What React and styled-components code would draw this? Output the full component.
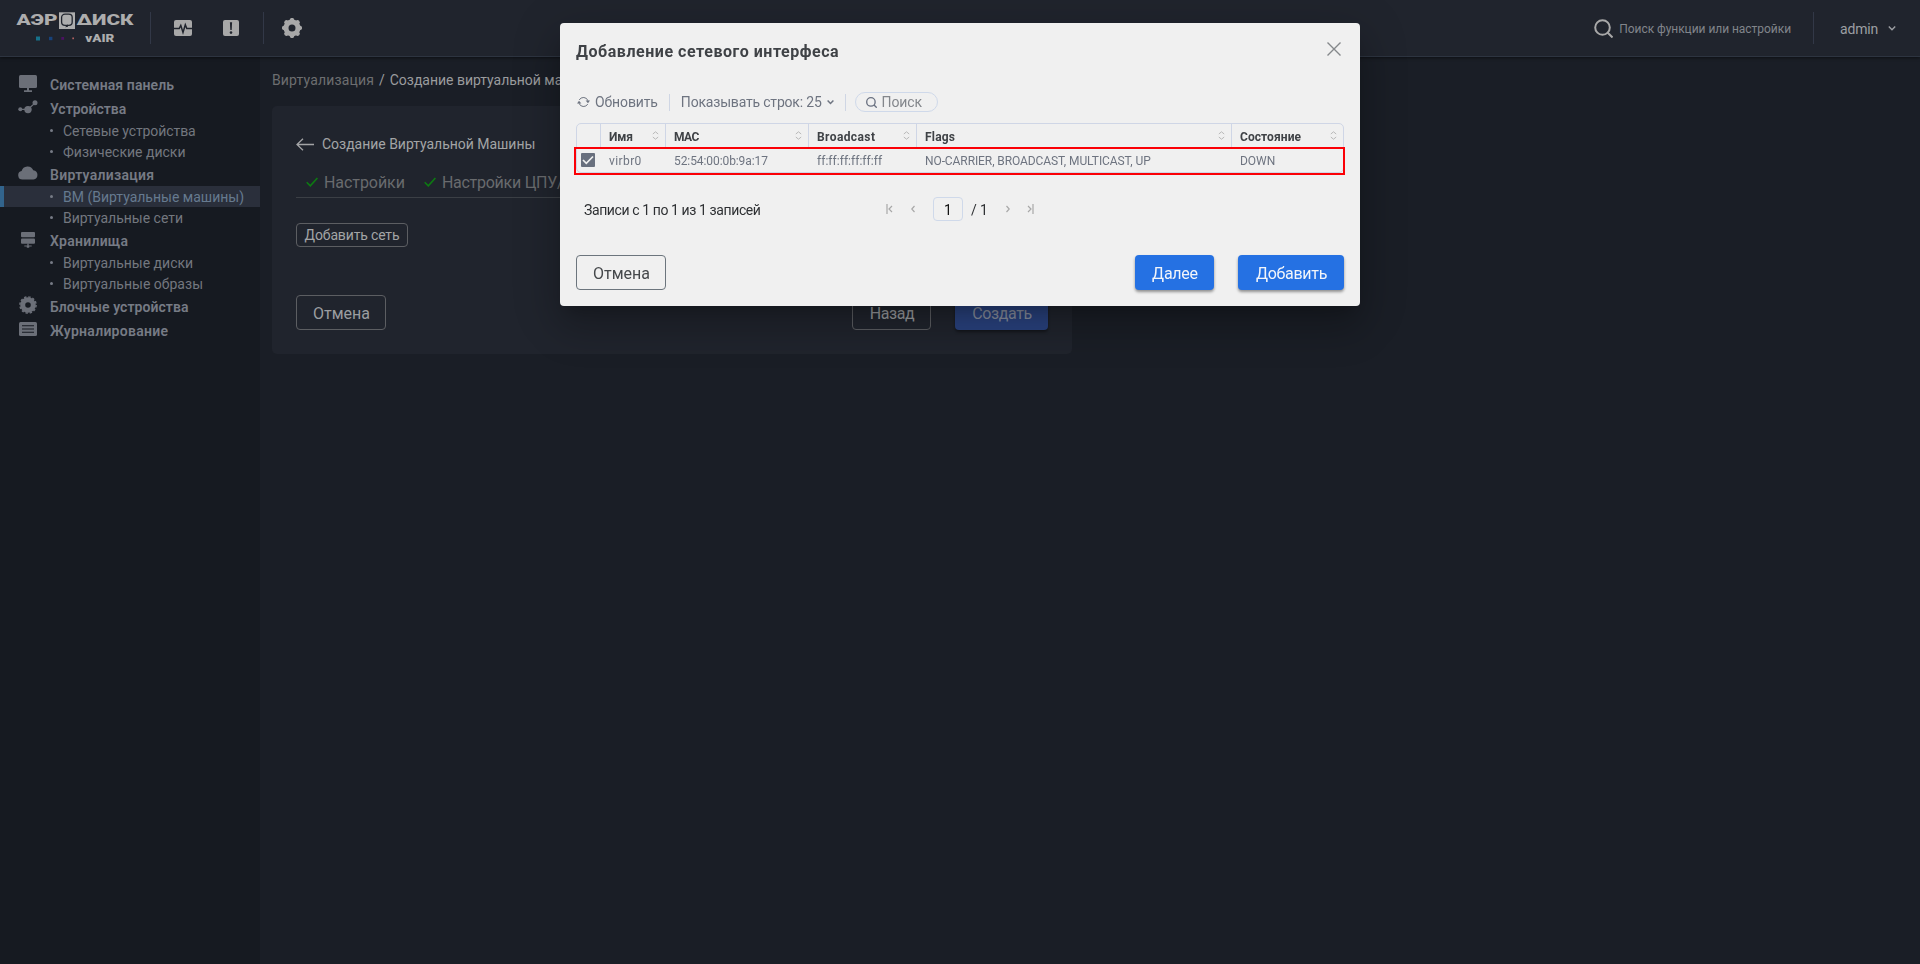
import React from "react";
import styled, { createGlobalStyle, css } from "styled-components";

const GlobalStyle = createGlobalStyle`
  *, *::before, *::after { box-sizing: border-box; }
  body { margin: 0; background: #1a1e26; font-family: Roboto, "Liberation Sans", sans-serif; font-size: 14px; }
  svg { display: block; flex: none; }
`;

/* text with adjustable tracking */
const Label = styled.span`
  letter-spacing: ${(p) => p.$ls || 0}px;
  white-space: nowrap;
`;

const Page = styled.div`
  display: flex;
  flex-direction: column;
  height: 964px;
  overflow: hidden;
`;

/* ---------- header ---------- */
const Header = styled.header`
  display: flex;
  align-items: flex-start;
  height: 57px;
  padding: 12px 24px 0 16px;
  background: #20242d;
  border-bottom: 1px solid #2d3440;
  box-shadow: 0 1px 3px rgba(0, 0, 0, 0.5);
  position: relative;
  color: #a8a8a8;
`;
const HeaderDivider = styled.div`
  width: 1px;
  height: 32px;
  background: #323847;
`;
const HeaderIcons = styled.div`
  display: flex;
  align-items: center;
  height: 32px;
  gap: ${(p) => p.$gap || 0}px;
  padding: ${(p) => p.$pad};
`;
const HeaderSearch = styled.div`
  display: flex;
  align-items: center;
  gap: 6px;
  height: 32px;
  margin-left: auto;
  padding-right: 22px;
  font-size: 12px;
  color: #81858b;
  span { padding-top: 2px; }
  svg { color: #a8a8a8; }
`;
const UserMenu = styled.div`
  display: flex;
  align-items: center;
  gap: 10px;
  height: 34px;
  padding-left: 26px;
  font-size: 14px;
  color: #9c9fa3;
`;

/* ---------- side navigation ---------- */
const Body = styled.div`
  display: flex;
  flex: 1;
`;
const Sidebar = styled.nav`
  width: 260px;
  padding-top: 15px;
  background: #161a21;
`;
const NavSection = styled.div`
  display: flex;
  align-items: center;
  height: 24px;
  padding-left: 18px;
  color: #767b85;
  font-size: 14px;
  font-weight: 600;
  ${Label} { padding-top: 2px; }
`;
const NavIcon = styled.span`
  display: flex;
  justify-content: center;
  align-items: center;
  width: 20px;
  height: 20px;
  margin-right: 12px;
  margin-bottom: ${(p) => p.$lift}px;
  color: #6b6f78;
`;
const NavItem = styled.div`
  display: flex;
  align-items: center;
  height: 21px;
  padding-left: 50px;
  border-left: 0 solid #32648c;
  color: #73777f;
  font-size: 14px;
  &::before {
    content: "";
    width: 3px;
    height: 3px;
    margin-right: 10px;
    border-radius: 50%;
    background: #767b85;
  }
  ${(p) =>
    p.$active &&
    css`
      padding-left: 46px;
      border-left-width: 4px;
      background: #2a2f3b;
      color: #667a8f;
    `}
`;

/* ---------- main area ---------- */
const Main = styled.main`
  flex: 1;
  padding: 14px 12px 0;
`;
const Breadcrumbs = styled.div`
  display: flex;
  gap: 5px;
  height: 18px;
  line-height: 18px;
  font-size: 14px;
  color: #9b9c9e;
`;
const Crumb = styled(Label)`
  color: #6d6e70;
`;
const Card = styled.section`
  display: flex;
  flex-direction: column;
  width: 800px;
  height: 248px;
  margin-top: 17px;
  padding: 24px;
  border-radius: 5px;
  background: #20242d;
`;
const CardTitle = styled.div`
  display: flex;
  align-items: center;
  gap: 8px;
  height: 28px;
  font-size: 14px;
  color: #a3a4a6;
`;
const Tabs = styled.div`
  display: flex;
  height: 35px;
  margin-top: 5px;
  padding: 9px 0 0 10px;
  gap: 19px;
  border-bottom: 1px solid #3b3f45;
`;
const Tab = styled.div`
  display: flex;
  align-items: center;
  gap: 6px;
  height: 20px;
  font-size: 16px;
  color: #696b6e;
  svg { color: #0d7a12; }
`;
const SmallButton = styled.button`
  align-self: flex-start;
  width: 112px;
  height: 24px;
  margin-top: 25px;
  padding: 0;
  border: 1px solid #5c5e62;
  border-radius: 4px;
  background: none;
  color: #a3a4a6;
  font: 14px Roboto, sans-serif;
`;
const Button = styled.button`
  width: ${(p) => p.$w}px;
  height: 35px;
  padding: 2px 0 0 1px;
  border: 1px solid ${(p) => (p.$dim ? "#5c5e62" : "#6c757d")};
  border-radius: 4px;
  background: none;
  color: ${(p) => (p.$dim ? "#9b9da0" : "#45484b")};
  font: 16px Roboto, sans-serif;
  ${(p) =>
    p.$primary &&
    css`
      border: 0;
      background: ${p.$dim ? "#29427f" : "#2571e3"};
      color: ${p.$dim ? "#888f9f" : "#f2f5fa"};
      box-shadow: 0 2px 3px rgba(0, 0, 0, 0.4);
    `}
`;
const ButtonRow = styled.div`
  display: flex;
  gap: 24px;
  margin-top: ${(p) => p.$top}px;
  & > :first-child { margin-right: auto; }
`;

/* ---------- dialog ---------- */
const Overlay = styled.div`
  position: fixed;
  inset: 0;
  display: flex;
  justify-content: center;
  align-items: flex-start;
  padding-top: 23px;
`;
const Dialog = styled.div`
  width: 800px;
  height: 283px;
  padding: 16px;
  border-radius: 4px;
  background: #f0f0f0;
  box-shadow: 0 11px 15px -7px rgba(0, 0, 0, 0.2), 0 24px 38px 3px rgba(0, 0, 0, 0.14),
    0 9px 46px 8px rgba(0, 0, 0, 0.12);
`;
const DialogHead = styled.div`
  display: flex;
  justify-content: space-between;
  align-items: flex-start;
  height: 49px;
  padding-right: 3px;
  color: #3f4246;
  font-size: 16px;
  font-weight: 700;
  line-height: 25px;
`;
const CloseIcon = styled.svg`
  margin-top: 3px;
  color: #85888b;
`;
const Toolbar = styled.div`
  display: flex;
  align-items: center;
  height: 28px;
  font-size: 14px;
  color: #6e7480;
`;
const ToolGroup = styled.div`
  display: flex;
  align-items: center;
  gap: 5px;
  padding: ${(p) => p.$pad};
`;
const ToolDivider = styled.div`
  width: 1px;
  height: 17px;
  background: #cfd6e4;
`;
const SearchPill = styled.div`
  display: flex;
  align-items: center;
  gap: 5px;
  width: 83px;
  height: 20px;
  margin-left: 9px;
  padding-left: 10px;
  border: 1px solid #cfd9ea;
  border-radius: 10px;
  color: #84878c;
  svg { color: #6a7180; }
`;
const Table = styled.div`
  margin-top: 7px;
  height: 50px;
  border: 1px solid #cfd6e6;
  border-radius: 5px;
`;
const columns = css`
  display: grid;
  grid-template-columns: 23px 65px 143px 108px 315px 112px;
  font-size: 12px;
`;
const HeadRow = styled.div`
  ${columns}
  height: 23px;
`;
const HeadCell = styled.div`
  display: flex;
  justify-content: space-between;
  align-items: center;
  padding: 2px 6px 0 8px;
  color: #3f4246;
  font-weight: 700;
  & + & { border-left: 1px solid #cfd6e6; }
  svg { margin-top: -3px; color: #b8b8b8; }
`;
const DataRow = styled.div`
  ${columns}
  position: relative;
  height: 25px;
  color: #6e7480;
  /* frame drawn around the selected row */
  &::after {
    content: "";
    position: absolute;
    inset: 0 -2px -3px -3px;
    border: 2px solid #fb0006;
  }
`;
const Cell = styled.div`
  display: flex;
  align-items: center;
  padding-left: ${(p) => (p.$check ? 4 : 9)}px;
  padding-top: ${(p) => (p.$check ? 0 : 3)}px;
`;
const Checkbox = styled.span`
  display: flex;
  align-items: center;
  justify-content: center;
  width: 14px;
  height: 14px;
  border-radius: 1px;
  background: #69707e;
  color: #f0f0f0;
`;
const Pager = styled.div`
  display: flex;
  align-items: center;
  height: 26px;
  margin-top: 23px;
  padding-left: 8px;
  color: #2e3033;
  font-size: 14px;
  ${Label} { padding-top: 2px; }
`;
const PagerNav = styled.div`
  display: flex;
  align-items: center;
  margin-left: auto;
  padding-right: 310px;
  svg { color: #a8a8a8; }
`;
const PageInput = styled.div`
  width: 30px;
  height: 24px;
  margin: 0 8px 0 18px;
  border: 1px solid #cfd9ea;
  border-radius: 4px;
  color: #111;
  line-height: 24px;
  text-align: center;
`;

/* ---------- icons ---------- */
const Stroke = ({ w, h, d, sw = 1.4, box }) => (
  <svg width={w} height={h} viewBox={box || `0 0 ${w} ${h}`} fill="none" stroke="currentColor" strokeWidth={sw}>
    <path d={d} />
  </svg>
);

const Logo = () => (
  <svg width="119" height="32" viewBox="0 0 119 32" fill="#adadad" fontFamily="Roboto, sans-serif" fontWeight="900">
    <text x="0.5" y="12.6" fontSize="15" textLength="41" lengthAdjust="spacingAndGlyphs">АЭР</text>
    <rect x="43" y="0.3" width="16" height="16.7" />
    <rect x="45.6" y="2.2" width="10.6" height="11.2" rx="3.4" fill="none" stroke="#20242d" strokeWidth="1.3" />
    <path d="M49 15.2l3-3v2.6z" fill="#20242d" />
    <text x="60.5" y="12.6" fontSize="15" textLength="57" lengthAdjust="spacingAndGlyphs">ΔИСК</text>
    <rect x="20" y="24.5" width="4" height="4" fill="#16718a" />
    <rect x="33" y="24.8" width="3.4" height="3.4" fill="#17427a" />
    <rect x="45.3" y="25" width="2.8" height="2.8" fill="#4b1262" />
    <rect x="56.3" y="25.5" width="1.7" height="1.7" fill="#b06060" />
    <text x="69.3" y="30" fontSize="10" textLength="29" lengthAdjust="spacingAndGlyphs">vAIR</text>
  </svg>
);

const PulseIcon = () => (
  <svg width="18" height="16" viewBox="0 0 18 16">
    <rect width="18" height="16" rx="2" fill="#a8a8a8" />
    <path d="M0 8.6h5.2l1.6-3.2 2.2 7 2.3-7.6 1.5 3.8H18" fill="none" stroke="#20242d" strokeWidth="1.5" />
  </svg>
);
const AlertIcon = () => (
  <svg width="16" height="16" viewBox="0 0 16 16">
    <rect width="16" height="16" rx="2" fill="#a8a8a8" />
    <path d="M6.9 2.3h2.2l-.4 7.6H7.3z" fill="#20242d" />
    <circle cx="8" cy="12.6" r="1.3" fill="#20242d" />
  </svg>
);
const GearIcon = () => (
  <svg width="20" height="20" viewBox="-10 -10 20 20" fill="#a8a8a8">
    <circle r="6" fill="none" stroke="#a8a8a8" strokeWidth="5" />
    {[0, 45, 90, 135, 180, 225, 270, 315].map((a) => (
      <circle key={a} cx="0" cy="-7.8" r="2.3" transform={`rotate(${a})`} />
    ))}
  </svg>
);
const MonitorIcon = () => (
  <svg width="18" height="17" viewBox="0 0 18 17" fill="currentColor">
    <rect width="18" height="13" rx="1.5" />
    <path d="M8 13h2v2.2h3V17H5v-1.8h3z" />
  </svg>
);
const NodesIcon = () => (
  <svg width="20" height="14" viewBox="0 0 20 14" fill="currentColor">
    <path d="M2 9.3h8L17.5 2.6" fill="none" stroke="currentColor" strokeWidth="1.2" />
    <circle cx="2.3" cy="9.3" r="2" />
    <circle cx="10" cy="9.6" r="3.7" />
    <circle cx="17" cy="2.7" r="2.5" />
  </svg>
);
const CloudIcon = () => (
  <svg width="20" height="14" viewBox="0 0 20 14" fill="currentColor">
    <path d="M4.5 13.5A4.3 4.3 0 0 1 3.6 5 6.2 6.2 0 0 1 15.3 4.2 4.7 4.7 0 0 1 15.5 13.5z" />
  </svg>
);
const StorageIcon = () => (
  <svg width="14" height="16" viewBox="0 0 14 16" fill="currentColor">
    <rect x="0" y="0" width="14" height="5.2" rx="1" />
    <rect x="0" y="6.5" width="14" height="5.2" rx="1" />
    <path d="M6.3 11.5h1.4v2h3v1H8.200v1.300H5.800v-1.300H3.300v-1h3z" />
  </svg>
);
const CogIcon = () => (
  <svg width="18" height="18" viewBox="-9 -9 18 18">
    <circle r="5.3" fill="none" stroke="currentColor" strokeWidth="5" />
    <circle r="8.1" fill="none" stroke="currentColor" strokeWidth="1.5" strokeDasharray="2.4 1.84" />
  </svg>
);
const JournalIcon = () => (
  <svg width="18" height="14" viewBox="0 0 18 14">
    <rect width="18" height="14" rx="1.5" fill="currentColor" />
    <path d="M3 3.700h12M3 7h12M3 10.300h12" stroke="#161a21" strokeWidth="1.1" />
  </svg>
);
const MagnifierIcon = ({ size, sw }) => (
  <svg width={size} height={size} viewBox="0 0 19 19" fill="none" stroke="currentColor" strokeWidth={sw}>
    <circle cx="8.5" cy="8.5" r="7.3" />
    <path d="M13.5 13.5l5 5" />
  </svg>
);
const CheckIcon = () => <Stroke w={12} h={10} sw={1.6} d="M.7 5.200l3.600 3.700L11.400 1" />;
const RefreshIcon = () => (
  <svg width="13" height="12" viewBox="0 0 13 12" fill="none" stroke="currentColor" strokeWidth="1">
    <path d="M2.2 4A4.800 4.800 0 0 1 11 4.800M10.800 8A4.800 4.800 0 0 1 2 7.200" />
    <path d="M8.600 4.600h4.400L11 7.200zM0 7.400h4.400L2 4.800z" fill="currentColor" stroke="none" />
  </svg>
);
const SortIcon = () => <Stroke w={7} h={9} sw={1} d="M.8 3L3.500.8 6.200 3M.8 6L3.500 8.200 6.200 6" />;

/* ---------- data ---------- */
const NAV = [
  { title: "Системная панель", ls: 0.1, lift: 2, icon: <MonitorIcon />, items: [] },
  {
    title: "Устройства",
    lift: 2,
    icon: <NodesIcon />,
    items: [{ text: "Сетевые устройства", ls: -0.08 }, { text: "Физические диски", ls: 0 }],
  },
  {
    title: "Виртуализация",
    ls: 0.28,
    lift: 2,
    icon: <CloudIcon />,
    items: [{ text: "ВМ (Виртуальные машины)", ls: 0, active: true }, { text: "Виртуальные сети" }],
  },
  {
    title: "Хранилища",
    ls: 0.25,
    lift: 0,
    icon: <StorageIcon />,
    items: [{ text: "Виртуальные диски" }, { text: "Виртуальные образы", ls: 0.02 }],
  },
  { title: "Блочные устройства", ls: 0.05, lift: 2, icon: <CogIcon />, items: [] },
  { title: "Журналирование", ls: 0.27, lift: 2, icon: <JournalIcon />, items: [] },
];

const HEAD = [
  ["Имя", -0.1],
  ["MAC", -0.5],
  ["Broadcast", 0.41],
  ["Flags", 0.2],
  ["Состояние", 0.08],
];
const ROW = [
  ["virbr0", 0.4],
  ["52:54:00:0b:9a:17", -0.08],
  ["ff:ff:ff:ff:ff:ff", 0.03],
  ["NO-CARRIER, BROADCAST, MULTICAST, UP", -0.09],
  ["DOWN", -0.05],
];

function TopBar() {
  return (
    <Header>
      <Logo />
      <HeaderIcons $pad="0 0 0 15px">
        <HeaderDivider />
      </HeaderIcons>
      <HeaderIcons $gap={31} $pad="0 24px 0 23px">
        <PulseIcon />
        <AlertIcon />
      </HeaderIcons>
      <HeaderDivider />
      <HeaderIcons $pad="0 0 0 18px">
        <GearIcon />
      </HeaderIcons>
      <HeaderSearch>
        <MagnifierIcon size={19} sw={2} />
        <Label $ls={-0.04}>Поиск функции или настройки</Label>
      </HeaderSearch>
      <HeaderDivider />
      <UserMenu>
        <Label $ls={-0.2}>admin</Label>
        <Stroke w={8} h={10} d="M.8 2.500L4 5.700 7.200 2.500" />
      </UserMenu>
    </Header>
  );
}

function Navigation() {
  return (
    <Sidebar>
      {NAV.map((s) => (
        <div key={s.title}>
          <NavSection>
            <NavIcon $lift={s.lift}>{s.icon}</NavIcon>
            <Label $ls={s.ls}>{s.title}</Label>
          </NavSection>
          {s.items.map((i) => (
            <NavItem key={i.text} $active={i.active}>
              <Label $ls={i.ls}>{i.text}</Label>
            </NavItem>
          ))}
        </div>
      ))}
    </Sidebar>
  );
}

function InterfaceDialog() {
  return (
    <Overlay>
      <Dialog>
        <DialogHead>
          <Label $ls={0.54}>Добавление сетевого интерфеса</Label>
          <CloseIcon width="14" height="14" viewBox="0 0 14 14" fill="none" stroke="currentColor" strokeWidth="1.4">
            <path d="M.5.5l13 13M13.500.5l-13 13" />
          </CloseIcon>
        </DialogHead>
        <Toolbar>
          <ToolGroup $pad="0 11px 0 1px">
            <RefreshIcon />
            <Label $ls={-0.11}>Обновить</Label>
          </ToolGroup>
          <ToolDivider />
          <ToolGroup $pad="0 11px 0 11px">
            <Label $ls={-0.19}>Показывать строк: 25</Label>
            <Stroke w={7} h={7} sw={1.5} d="M.6 1.500l2.900 3 2.900-3" />
          </ToolGroup>
          <ToolDivider />
          <SearchPill>
            <MagnifierIcon size={11} sw={2.3} />
            <Label $ls={-0.1}>Поиск</Label>
          </SearchPill>
        </Toolbar>
        <Table>
          <HeadRow>
            <HeadCell />
            {HEAD.map(([text, ls]) => (
              <HeadCell key={text}>
                <Label $ls={ls}>{text}</Label>
                <SortIcon />
              </HeadCell>
            ))}
          </HeadRow>
          <DataRow>
            <Cell $check>
              <Checkbox>
                <Stroke w={12} h={10} sw={1.7} d="M1 5l3.300 3.300L11 1.500" />
              </Checkbox>
            </Cell>
            {ROW.map(([text, ls]) => (
              <Cell key={text}>
                <Label $ls={ls}>{text}</Label>
              </Cell>
            ))}
          </DataRow>
        </Table>
        <Pager>
          <Label $ls={-0.4}>Записи с 1 по 1 из 1 записей</Label>
          <PagerNav>
            <Stroke w={7} h={10} sw={1.2} d="M1 0v10M6 2L3 5l3 3" />
            <HeaderIcons $pad="0 0 0 18px">
              <Stroke w={4} h={8} sw={1.2} d="M3.500 1L.8 4l2.700 3" />
            </HeaderIcons>
            <PageInput>1</PageInput>
            <Label $ls={0}>/ 1</Label>
            <HeaderIcons $gap={17} $pad="0 0 0 18px">
              <Stroke w={4} h={8} sw={1.2} d="M.5 1l2.700 3L.5 7" />
              <Stroke w={7} h={10} sw={1.2} d="M6 0v10M1 2l3 3-3 3" />
            </HeaderIcons>
          </PagerNav>
        </Pager>
        <ButtonRow $top={33}>
          <Button $w={90}>Отмена</Button>
          <Button $w={79} $primary>
            <Label $ls={-0.24}>Далее</Label>
          </Button>
          <Button $w={106} $primary>
            <Label $ls={-0.3}>Добавить</Label>
          </Button>
        </ButtonRow>
      </Dialog>
    </Overlay>
  );
}

export default function App() {
  return (
    <Page>
      <GlobalStyle />
      <TopBar />
      <Body>
        <Navigation />
        <Main>
          <Breadcrumbs>
            <Crumb $ls={0.15}>Виртуализация</Crumb>
            <Label>/</Label>
            <Label $ls={-0.02}>Создание виртуальной машины</Label>
          </Breadcrumbs>
          <Card>
            <CardTitle>
              <Stroke w={18} h={13} sw={1.3} d="M18 6.500H1M7 .7L1 6.500l6 5.800" />
              <Label $ls={-0.02}>Создание Виртуальной Машины</Label>
            </CardTitle>
            <Tabs>
              <Tab>
                <CheckIcon />
                <Label $ls={-0.06}>Настройки</Label>
              </Tab>
              <Tab>
                <CheckIcon />
                <Label $ls={-0.26}>Настройки ЦПУ/Память</Label>
              </Tab>
            </Tabs>
            <SmallButton>
              <Label $ls={-0.15}>Добавить сеть</Label>
            </SmallButton>
            <ButtonRow $top={48}>
              <Button $w={90} $dim>Отмена</Button>
              <Button $w={79} $dim>
                <Label $ls={-0.4}>Назад</Label>
              </Button>
              <Button $w={93} $dim $primary>
                <Label $ls={-0.38}>Создать</Label>
              </Button>
            </ButtonRow>
          </Card>
        </Main>
      </Body>
      <InterfaceDialog />
    </Page>
  );
}
